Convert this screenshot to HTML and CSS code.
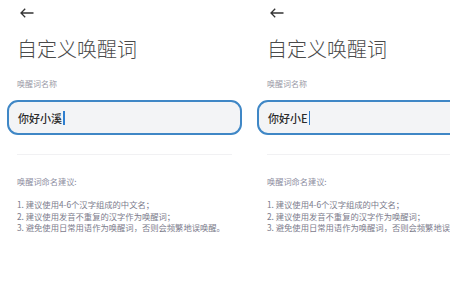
FILE: index.html
```html
<!DOCTYPE html>
<html>
  <head>
    <title>自定义唤醒词</title>
    <link rel="stylesheet" href="styles.css">
  </head>
  <body>
    <div class="screen">
      <div class="topbar">
        <svg class="back" width="14" height="10" viewBox="0 0 14 10"><path d="M13.5 5H1M5.2 0.8L1 5l4.2 4.2" fill="none" stroke="#333" stroke-width="1.3"/></svg>
      </div>
      <h1 class="title">自定义唤醒词</h1>
      <div class="label">唤醒词名称</div>
      <div class="field"><span class="value">你好小溪</span><span class="caret"></span></div>
      <div class="divider"></div>
      <div class="tips-title">唤醒词命名建议:</div>
      <ol class="tips">
        <li>1. 建议使用4-6个汉字组成的中文名；</li>
        <li>2. 建议使用发音不重复的汉字作为唤醒词；</li>
        <li>3. 避免使用日常用语作为唤醒词，否则会频繁地误唤醒。</li>
      </ol>
    </div>
    <div class="screen">
      <div class="topbar">
        <svg class="back" width="14" height="10" viewBox="0 0 14 10"><path d="M13.5 5H1M5.2 0.8L1 5l4.2 4.2" fill="none" stroke="#333" stroke-width="1.3"/></svg>
      </div>
      <h1 class="title">自定义唤醒词</h1>
      <div class="label">唤醒词名称</div>
      <div class="field"><span class="value">你好小E</span><span class="caret"></span></div>
      <div class="divider"></div>
      <div class="tips-title">唤醒词命名建议:</div>
      <ol class="tips">
        <li>1. 建议使用4-6个汉字组成的中文名；</li>
        <li>2. 建议使用发音不重复的汉字作为唤醒词；</li>
        <li>3. 避免使用日常用语作为唤醒词，否则会频繁地误唤醒。</li>
      </ol>
    </div>
  </body>
</html>
```
FILE: styles.css
```css
html, body { margin: 0; padding: 0; background: #fff; }
body { display: flex; width: 450px; height: 300px; overflow: hidden; font-family: "Noto Sans CJK SC", "Noto Sans", sans-serif; }

.screen { width: 250px; flex-shrink: 0; box-sizing: border-box; padding-top: 8px; }

.topbar { height: 10px; padding-left: 20px; }
.back { display: block; }

.title { margin: 18px 0 0 17px; font-size: 20px; font-weight: 300; line-height: 26px; color: #4a4a4a; letter-spacing: 0; }

.label { margin: 16px 0 0 17px; font-size: 8px; line-height: 12px; color: #9a9aa6; }

.field {
  margin: 10px 8px 0 7px;
  height: 35px;
  box-sizing: border-box;
  border: 2px solid #3f87c6;
  border-radius: 11px;
  background: #f3f4f6;
  display: flex;
  align-items: center;
  padding-left: 9px;
}
.value { font-size: 11px; font-weight: 500; color: #2a2a2a; }
.caret { width: 1.5px; height: 14px; background: #2f7fd0; margin-left: 1px; }

.divider { margin: 19px 18px 0 17px; height: 1px; background: #f1f1f3; }

.tips-title { margin: 20px 0 0 17px; font-size: 8.2px; line-height: 12px; color: #8c8ca0; }

.tips { list-style: none; margin: 12px 0 0 17px; padding: 0; font-size: 8.3px; line-height: 11.7px; color: #7c7c8c; white-space: nowrap; }
```
